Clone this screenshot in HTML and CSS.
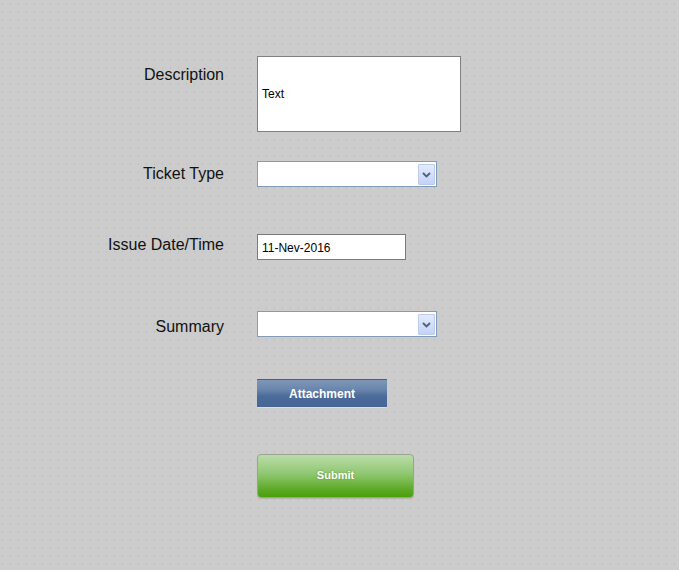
FILE: index.html
```html
<!DOCTYPE html>
<html>
<head>
<meta charset="utf-8">
<title>Ticket</title>
<link rel="stylesheet" href="styles.css">
</head>
<body>
<form class="form">
  <div class="row row-desc">
    <label class="label">Description</label>
    <div class="field textbox">Text</div>
  </div>
  <div class="row row-type">
    <label class="label">Ticket Type</label>
    <div class="field select">
      <span class="arrow"><svg width="9" height="6" viewBox="0 0 9 6"><path d="M1 1 L4.5 4.5 L8 1" fill="none" stroke="#4d5f82" stroke-width="1.8"/></svg></span>
    </div>
  </div>
  <div class="row row-date">
    <label class="label">Issue Date/Time</label>
    <div class="field datebox">11-Nev-2016</div>
  </div>
  <div class="row row-summary">
    <label class="label">Summary</label>
    <div class="field select">
      <span class="arrow"><svg width="9" height="6" viewBox="0 0 9 6"><path d="M1 1 L4.5 4.5 L8 1" fill="none" stroke="#4d5f82" stroke-width="1.8"/></svg></span>
    </div>
  </div>
  <div class="row row-attach">
    <span class="label"></span>
    <button type="button" class="btn-attach">Attachment</button>
  </div>
  <div class="row row-submit">
    <span class="label"></span>
    <button type="button" class="btn-submit">Submit</button>
  </div>
</form>
</body>
</html>
```
FILE: styles.css
```css
html, body {
  margin: 0;
  padding: 0;
}
body {
  width: 679px;
  height: 570px;
  overflow: hidden;
  background-color: #cccccc;
  background-image: url("data:image/svg+xml;utf8,<svg xmlns='http://www.w3.org/2000/svg' width='8' height='8'><rect x='2' y='3' width='1' height='2' fill='%23c0c0c0'/></svg>");
  background-size: 8px 8px;
  font-family: "Liberation Sans", Arial, sans-serif;
  color: #000;
}
.form {
  display: flex;
  flex-direction: column;
  padding-top: 56px;
}
.row {
  display: flex;
  align-items: flex-start;
}
.label {
  width: 224px;
  flex: none;
  text-align: right;
  font-size: 16px;
  line-height: 18px;
  margin-right: 33px;
  color: #111;
}
.row-desc .label { padding-top: 10px; }
.row-type { margin-top: 29px; }
.row-type .label { padding-top: 4px; }
.row-date { margin-top: 47px; }
.row-date .label { padding-top: 2px; }
.row-summary { margin-top: 51px; }
.row-summary .label { padding-top: 7px; }
.row-attach { margin-top: 42px; }
.row-submit { margin-top: 46px; }

.field {
  box-sizing: border-box;
  background: #fff;
  font-size: 12px;
  display: flex;
  align-items: center;
}
.textbox {
  width: 204px;
  height: 76px;
  border: 1px solid #808080;
  padding: 0 4px 0;
}
.datebox {
  width: 149px;
  height: 26px;
  border: 1px solid #7a7a7a;
  padding: 1px 4px 0;
}
.select {
  width: 180px;
  height: 26px;
  border: 1px solid #7f9db9;
  justify-content: flex-end;
  padding-right: 1px;
}
.arrow {
  box-sizing: border-box;
  width: 17px;
  height: 21px;
  border: 1px solid #bccbee;
  border-radius: 1px;
  background: linear-gradient(#e3ebfc, #c3d3f6);
  display: flex;
  align-items: center;
  justify-content: center;
  padding-top: 1px;
}
.btn-attach {
  box-sizing: border-box;
  width: 130px;
  height: 29px;
  border: none;
  border-top: 1px solid #4d5e75;
  border-bottom: 1px solid #d8dde6;
  background: linear-gradient(#7e96b8 0%, #6a86ad 35%, #4b6b9a 60%, #456696 100%);
  color: #fff;
  font-family: "Liberation Sans", Arial, sans-serif;
  font-weight: bold;
  font-size: 12px;
  padding: 0;
  padding-top: 1px;
}
.btn-submit {
  box-sizing: border-box;
  width: 157px;
  height: 44px;
  border: 1px solid #9aa394;
  border-radius: 4px;
  background: linear-gradient(#bbdca9 0%, #8fc771 45%, #5fab2a 80%, #4a9f09 100%);
  box-shadow: 0 1px 1px rgba(0,0,0,0.12);
  color: #fff;
  font-family: "Liberation Sans", Arial, sans-serif;
  font-weight: bold;
  font-size: 11px;
  padding: 0 0 2px;
  text-shadow: 0 0 2px rgba(60,120,40,0.6);
}
```
